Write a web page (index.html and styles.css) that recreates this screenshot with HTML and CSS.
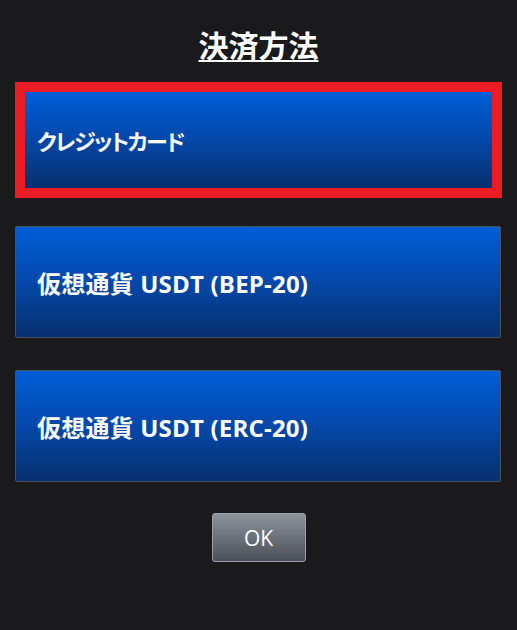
FILE: index.html
```html
<!DOCTYPE html>
<html lang="ja">
<head>
<meta charset="utf-8">
<title>決済方法</title>
<link rel="stylesheet" href="styles.css">
</head>
<body>
<div class="dialog">
  <h1 class="title">決済方法</h1>
  <div class="options">
    <button class="option selected"><span class="kana">クレジットカード</span></button>
    <button class="option">仮想通貨 USDT (BEP-20)</button>
    <button class="option">仮想通貨 USDT (ERC-20)</button>
  </div>
  <div class="actions">
    <button class="ok">OK</button>
  </div>
</div>
</body>
</html>
```

FILE: styles.css
```css
html, body {
  margin: 0;
  padding: 0;
  background: #1a1a1c;
  height: 100%;
}
.dialog {
  display: flex;
  flex-direction: column;
  align-items: stretch;
  padding: 24px 0 0 15px;
  width: 487px;
  font-family: "Open Sans", "Noto Sans CJK JP", sans-serif;
  color: #fff;
}
.title {
  margin: 0;
  align-self: center;
  font-size: 30px;
  line-height: 40px;
  font-weight: 700;
  font-family: "Noto Sans CJK JP", sans-serif;
  text-decoration: underline;
  text-decoration-thickness: 2px;
  text-underline-offset: 3px;
  color: #fff;
}
.options {
  display: flex;
  flex-direction: column;
  margin-top: 18px;
}
.option {
  display: flex;
  align-items: center;
  box-sizing: border-box;
  width: 486px;
  height: 112px;
  margin: 0 0 32px 0;
  padding: 0 0 0 21px;
  border: 1px solid #4a505c;
  border-radius: 2px;
  background: linear-gradient(to bottom, #005fd8 0%, #034cb4 40%, #08306f 100%);
  color: #fff;
  font-family: "Open Sans", "Noto Sans CJK JP", sans-serif;
  font-size: 24px;
  font-weight: 700;
  letter-spacing: 0.2px;
  text-align: left;
  cursor: pointer;
}
.option.selected {
  width: 487px;
  height: 116px;
  margin-bottom: 28px;
  padding-left: 12px;
  border: 10px solid #ed1c24;
  border-radius: 0;
}
.kana {
  font-size: 22px;
  font-feature-settings: "palt" 1;
  letter-spacing: -1.6px;
}
.actions {
  display: flex;
  justify-content: center;
  margin-top: -1px;
}
.ok {
  box-sizing: border-box;
  width: 94px;
  height: 49px;
  border: 1px solid #9ba1a9;
  border-radius: 3px;
  background: linear-gradient(to bottom, #8d939b 0%, #4b5058 100%);
  color: #fff;
  font-family: "Open Sans", sans-serif;
  font-size: 21px;
  font-weight: 400;
  cursor: pointer;
}
```
